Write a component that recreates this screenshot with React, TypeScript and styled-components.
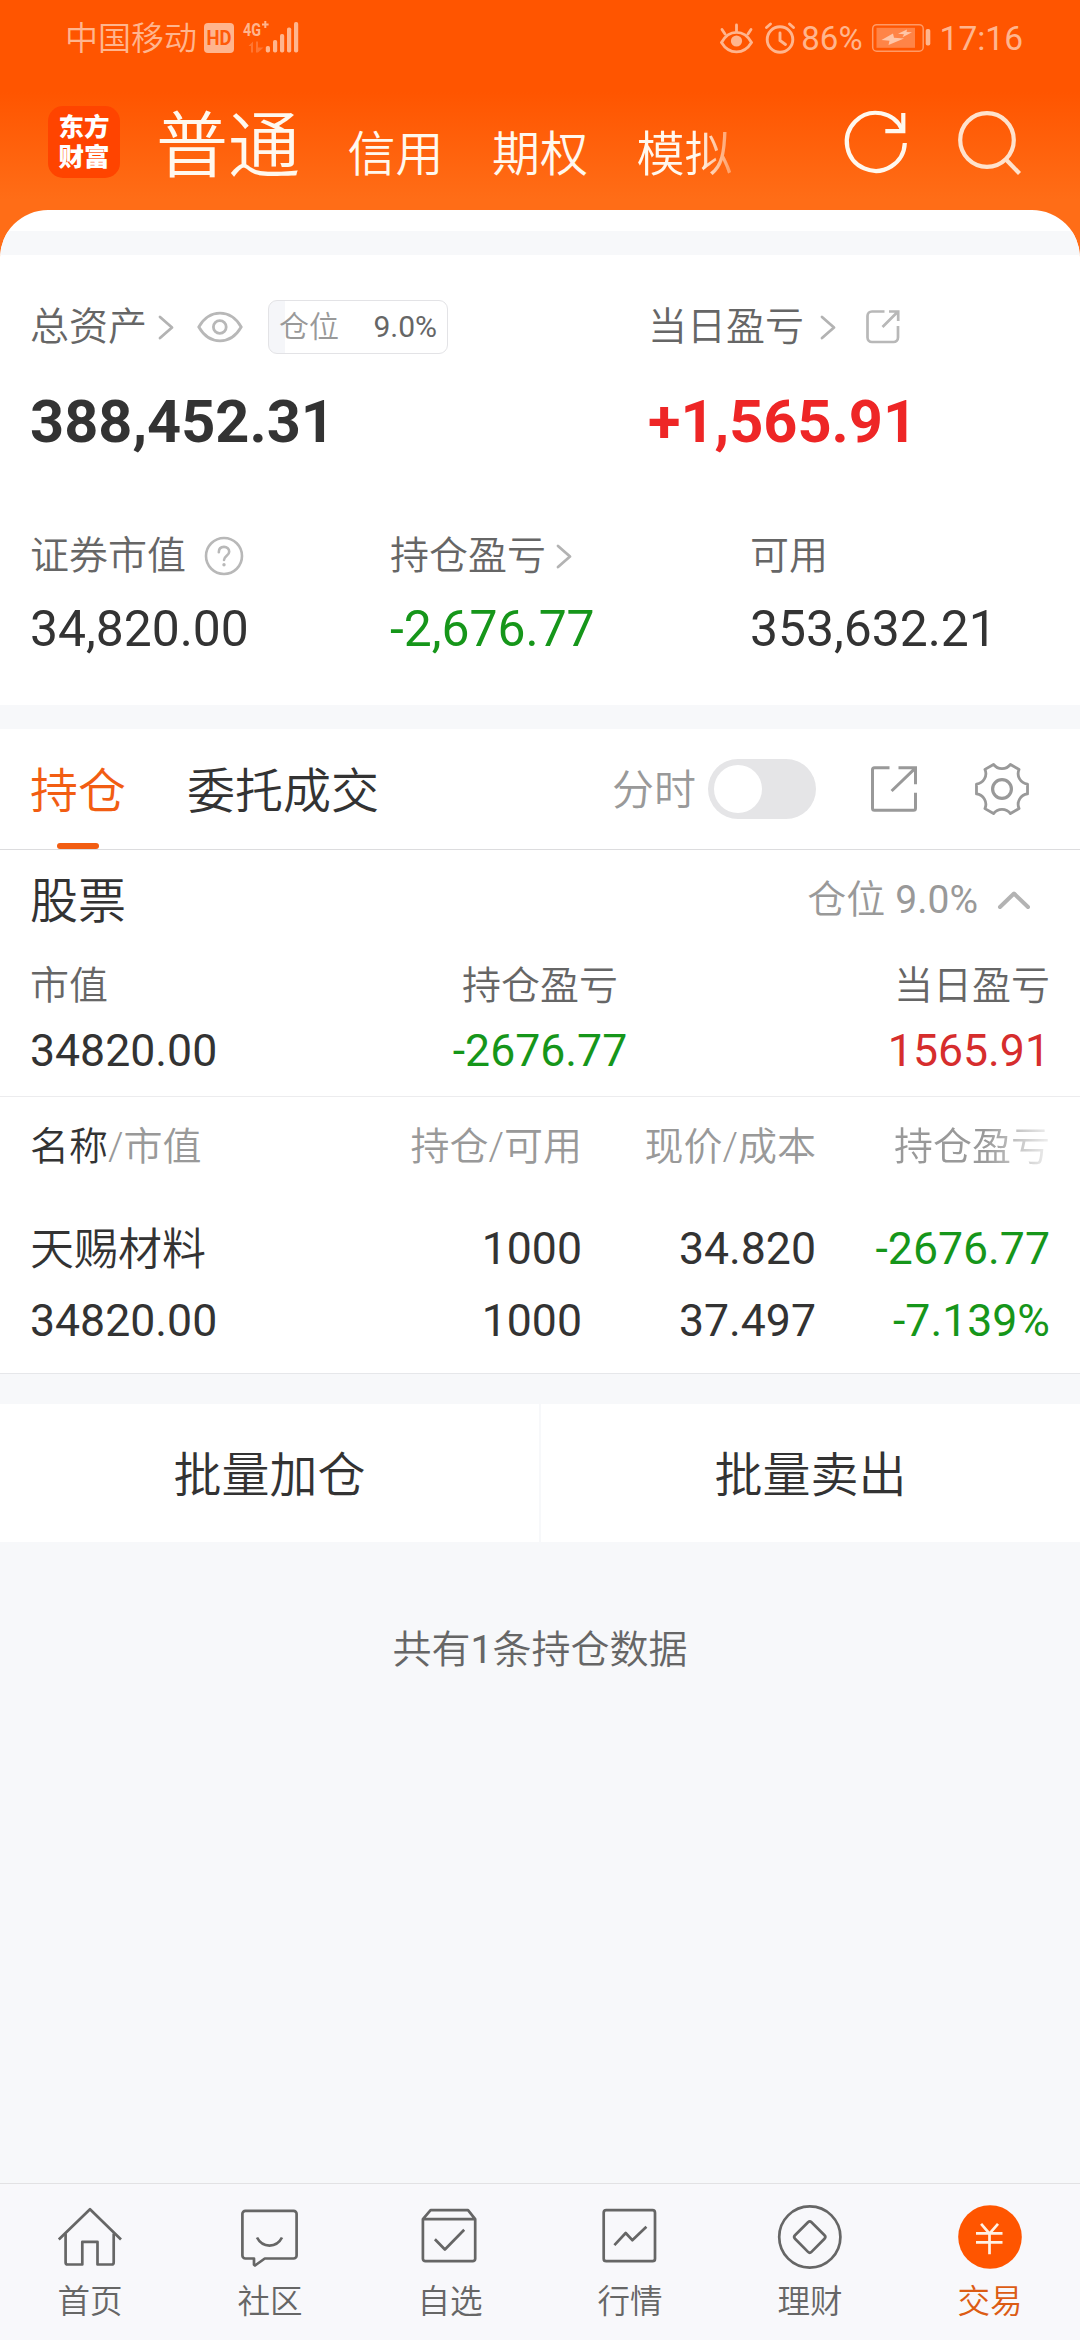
import React from 'react';
import styled, { createGlobalStyle } from 'styled-components';

const GlobalStyle = createGlobalStyle`
  * { box-sizing: border-box; }
  body { margin: 0; background: #f7f8fa; }
  svg { display: block; flex: none; overflow: visible; }
`;

const ink = '#333333';
const grey = '#666666';
const pale = '#999999';
const green = '#16961a';
const red = '#ee2626';
const orange = '#f25d12';

const Screen = styled.div`
  width: 1080px;
  height: 2340px;
  display: flex;
  flex-direction: column;
  background: #f7f8fa;
  font-family: Roboto, 'Noto Sans CJK SC', sans-serif;
  font-weight: 350;
  line-height: 1.4;
  color: ${ink};
  white-space: nowrap;
  overflow: hidden;
`;

const Masthead = styled.header`
  height: 258px;
  margin-bottom: -48px;
  flex: none;
  background: linear-gradient(#ff5500 0, #ff5500 92px, #ff6d17 200px, #ff6d17 100%);
`;

const StatusBar = styled.div`
  display: flex;
  align-items: center;
  justify-content: space-between;
  height: 76px;
  padding: 0 57px 0 65px;
  color: #ffb58e;
`;

const StatusGroup = styled.div`
  display: flex;
  align-items: center;
`;

const StatusText = styled.span<{ $size: number; $w?: number; $ml?: number }>`
  font-size: ${p => p.$size}px;
  font-weight: ${p => p.$w ?? 400};
  line-height: 40px;
  padding-top: 2px;
  margin-left: ${p => p.$ml ?? 0}px;
`;

const IconSlot = styled.span<{ $ml?: number }>`
  margin-left: ${p => p.$ml ?? 0}px;
  display: flex;
`;

const TitleBar = styled.div`
  display: flex;
  align-items: center;
  height: 132px;
  padding-left: 48px;
  color: #fff8ee;
`;

const Logo = styled.div`
  width: 72px;
  height: 72px;
  border-radius: 15px;
  background: #ff4400;
  display: flex;
  flex-direction: column;
  align-items: center;
  justify-content: center;
  font-weight: 900;
  font-size: 25.5px;
  line-height: 30px;
  color: #fff;
`;

const ModeTabs = styled.nav`
  display: flex;
  align-items: baseline;
  width: 586px;
  margin-left: 36px;
  padding-top: 18px;
  line-height: 84px;
`;

const ModeTab = styled.span<{ $active?: boolean; $fade?: boolean }>`
  font-size: ${p => (p.$active ? 72 : 48)}px;
  margin-right: ${p => (p.$active ? 47.5 : 48.5)}px;
  ${p => p.$fade && 'mask-image: linear-gradient(90deg, #000 64%, rgba(0,0,0,.35) 100%);'}
`;

const Card = styled.section`
  position: relative;
  flex: none;
  height: 495px;
  border-radius: 48px 48px 0 0;
  overflow: hidden;
  background: #fff;
  padding-top: 21px;
`;

const Band = styled.div<{ $h: number }>`
  flex: none;
  height: ${p => p.$h}px;
  background: #f7f8fa;
`;

const AssetGrid = styled.div`
  display: grid;
  grid-template-columns: 618px 1fr;
  grid-template-rows: 54px 72px;
  row-gap: 32px;
  padding: 45px 0 0 30px;
  align-items: center;
`;

const MetricGrid = styled.div`
  display: grid;
  grid-template-columns: repeat(3, 360px);
  grid-template-rows: 54px 60px;
  row-gap: 16px;
  padding: 71px 0 0 30px;
  align-items: center;
`;

const Label = styled.div<{ $align?: string }>`
  display: flex;
  align-items: center;
  justify-content: ${p => p.$align ?? 'flex-start'};
  font-size: 39px;
  line-height: 54px;
  color: ${grey};
`;

const Figure = styled.div<{ $size: number; $color?: string; $bold?: boolean; $align?: string }>`
  font-size: ${p => p.$size}px;
  font-weight: ${p => (p.$bold ? 700 : 400)};
  color: ${p => p.$color ?? ink};
  text-align: ${p => p.$align ?? 'left'};
  line-height: 60px;
`;

const Ratio = styled.div`
  width: 180px;
  height: 54px;
  margin-left: 25px;
  padding: 0 10px 0 10px;
  border: 1px solid #e3e3e6;
  border-radius: 9px;
  background: linear-gradient(90deg, #f5f6f9 16px, #fff 16px);
  display: flex;
  align-items: center;
  justify-content: space-between;
  font-size: 30px;
  color: ${pale};
`;

const Num = styled.span<{ $color?: string }>`
  font-weight: 400;
  color: ${p => p.$color ?? 'inherit'};
`;

const Toolbar = styled.div`
  flex: none;
  display: flex;
  align-items: center;
  height: 121px;
  padding-left: 30px;
  background: #fff;
  border-bottom: 1px solid #dcdcde;
`;

const Tab = styled.div<{ $active?: boolean }>`
  height: 120px;
  margin-right: 61px;
  padding-top: 3px;
  display: flex;
  flex-direction: column;
  align-items: center;
  font-size: 48px;
  line-height: 120px;
  color: ${p => (p.$active ? orange : ink)};
  &::after {
    content: '';
    flex: none;
    width: 42px;
    height: 6px;
    margin-top: -9px;
    border-radius: 3px;
    background: ${p => (p.$active ? orange : 'transparent')};
  }
`;

const ToolLabel = styled.span`
  margin-left: auto;
  padding-top: 4px;
  font-size: 42px;
  color: ${pale};
`;

const Toggle = styled.span`
  width: 108px;
  height: 60px;
  margin-left: 12px;
  padding: 6px;
  border-radius: 30px;
  background: #e5e5e7;
  &::after {
    content: '';
    display: block;
    width: 48px;
    height: 48px;
    border-radius: 50%;
    background: #fff;
  }
`;

const Group = styled.section`
  flex: none;
  height: 247px;
  background: #fff;
  border-bottom: 1px solid #ececee;
`;

const GroupHead = styled.div`
  display: flex;
  align-items: center;
  justify-content: space-between;
  height: 102px;
  padding: 1px 49px 0 30px;
  font-size: 48px;
`;

const GroupRatio = styled.div`
  display: flex;
  align-items: center;
  gap: 10px;
  padding-bottom: 3px;
  font-size: 39px;
  color: ${pale};
`;

const GroupStats = styled.div`
  display: grid;
  grid-template-columns: repeat(3, 340px);
  grid-template-rows: 54px 60px;
  row-gap: 8px;
  padding: 7px 30px 0;
`;

const Table = styled.section`
  flex: none;
  height: 277px;
  background: #fff;
  border-bottom: 1px solid #e6e7ea;
`;

const TableRow = styled.div<{ $h: number; $mt?: number }>`
  display: grid;
  grid-template-columns: 318px repeat(3, 234px);
  align-items: center;
  height: ${p => p.$h}px;
  margin: ${p => p.$mt ?? 0}px 30px 0;
`;

const HeadCell = styled.div<{ $right?: boolean; $fade?: boolean }>`
  padding-top: 3px;
  font-size: 39px;
  text-align: ${p => (p.$right ? 'right' : 'left')};
  color: ${pale};
  ${p => p.$fade && 'mask-image: linear-gradient(90deg, #000 72%, rgba(0,0,0,.15) 100%);'}
`;

const Strong = styled.span`
  color: ${ink};
`;

const StockName = styled.div`
  padding-top: 2px;
  font-size: 44px;
  line-height: 58px;
`;

const Actions = styled.div`
  flex: none;
  display: grid;
  grid-template-columns: 1fr 1fr;
  gap: 2px;
  height: 138px;
`;

const Action = styled.div`
  display: flex;
  align-items: center;
  justify-content: center;
  padding-top: 5px;
  background: #fff;
  font-size: 48px;
`;

const Summary = styled.div`
  flex: 1;
  padding-top: 78px;
  text-align: center;
  font-size: 39px;
  line-height: 60px;
  color: ${grey};
`;

const BottomNav = styled.nav`
  flex: none;
  display: grid;
  grid-template-columns: repeat(6, 1fr);
  height: 157px;
  border-top: 1px solid #e2e2e4;
  background: #f8f8fb;
`;

const NavItem = styled.div<{ $active?: boolean }>`
  display: flex;
  flex-direction: column;
  align-items: center;
  padding-top: 21px;
  font-size: 32.6px;
  line-height: 40px;
  gap: 13px;
  color: ${p => (p.$active ? '#dc5c14' : grey)};
`;

const Chevron = ({ ml }: { ml: number }) => (
  <IconSlot $ml={ml}>
    <svg width="16" height="25" viewBox="0 0 16 25" fill="none" stroke="#b3b3b3" strokeWidth="2.8" strokeLinecap="round" strokeLinejoin="round">
      <path d="M2 2 L14 12.5 L2 23" />
    </svg>
  </IconSlot>
);

const Signal = () => (
  <svg width="94" height="32" viewBox="204 22 94 32" fill="#ffb58e">
    <rect x="204" y="23" width="30" height="30" rx="4" />
    <text x="206.5" y="45" fontSize="20" fontWeight="700" fill="#ff5a08" textLength="25" lengthAdjust="spacingAndGlyphs">HD</text>
    <text x="243" y="36" fontSize="19" fontWeight="700" textLength="18" lengthAdjust="spacingAndGlyphs">4G</text>
    <path d="M262 24.5h6.6M265.3 21v7" stroke="#ffb58e" strokeWidth="2" />
    <path d="M248.5 46l4.5-4.5v11h-2v-6.500zM256 41.500h2v6h5.500l-5.500 5h-2z" opacity=".35" />
    <rect x="265.800" y="46" width="4.200" height="6.500" rx="1.800" />
    <rect x="273" y="40" width="4.200" height="12.500" rx="1.800" />
    <rect x="280" y="34" width="4.200" height="18.500" rx="1.800" />
    <rect x="287" y="27.500" width="4.200" height="25" rx="1.800" />
    <rect x="294" y="22" width="4.200" height="30.500" rx="1.800" />
  </svg>
);

const EyeComfort = () => (
  <svg width="34" height="32" viewBox="717 21 34 32" fill="none" stroke="#ffb58e" strokeWidth="2.8" strokeLinecap="round">
    <path d="M719.500 41.500C727 28 742 28 749.500 41.500C742 54 727 54 719.500 41.500Z" />
    <circle cx="734.500" cy="40" r="5.600" fill="#ffb58e" stroke="none" />
    <path d="M734.500 24v6M720 28.500l3 4.500M749 28.500l-3 4.500" />
  </svg>
);

const Alarm = () => (
  <svg width="32" height="32" viewBox="762 21 32 32" fill="none" stroke="#ffb58e" strokeWidth="2.900" strokeLinecap="round">
    <circle cx="778" cy="38.500" r="12.800" />
    <path d="M778 32v7.500l5.500 4M764.500 26.500l4-3.500M791.500 26.500l-4-3.500" />
  </svg>
);

const Battery = () => (
  <svg width="58" height="30" viewBox="871 23 58 30" fill="none">
    <rect x="871.700" y="24.700" width="50.500" height="26.500" rx="4" stroke="#ff9a66" strokeWidth="1.500" />
    <rect x="875.500" y="27.800" width="38.500" height="20" fill="#ff8447" />
    <rect x="924.700" y="29" width="4.600" height="16.500" rx="1.800" fill="#ffb58e" />
    <path d="M892 33.500l-11.500 6.500 8 .8-1 4.200 15.500-6.500-10-.8zM906 29.500l-9 4.200 6 .5-1.500 3 9.500-5-5.500-.2z" fill="#ffc6a8" />
  </svg>
);

const Refresh = () => (
  <svg width="66" height="66" viewBox="843 110 66 66" fill="none" stroke="#fff8ee" strokeWidth="4.200">
    <path d="M904.800 144A29 29 0 1 1 902.300 131" />
    <path d="M903.300 114v18.200h-18" />
  </svg>
);

const Search = () => (
  <svg width="66" height="66" viewBox="956 108 66 66" fill="none" stroke="#ffe2cc" strokeWidth="4.200">
    <circle cx="987" cy="139" r="26.800" />
    <path d="M1005.500 158l14 14.500" />
  </svg>
);

const Eye = () => (
  <svg width="46" height="32" viewBox="0 0 46 32" fill="none" stroke="#b8b8b8" strokeWidth="2.800">
    <path d="M1.800 16C7 7 14 2.200 23 2.200S39 7 44.200 16C39 25 32 29.800 23 29.800S7 25 1.800 16Z" />
    <circle cx="22.800" cy="16" r="6.400" />
  </svg>
);

const Help = () => (
  <svg width="40" height="40" viewBox="0 0 40 40" fill="none" stroke="#b8b8b8" strokeWidth="2.600" strokeLinecap="round">
    <circle cx="20" cy="20" r="18" />
    <path d="M14.800 16.200c0-3.400 2.200-5.300 5.200-5.300s5.200 2 5.200 4.800c0 4-5.200 4-5.200 8.300" />
    <circle cx="20" cy="28.800" r="1.700" fill="#b8b8b8" stroke="none" />
  </svg>
);

const ShareSmall = () => (
  <svg width="34" height="34" viewBox="865 310 34 34" fill="none" stroke="#b8b8b8" strokeWidth="2.700">
    <path d="M883.500 311.500h-12.500a4.500 4.500 0 0 0-4.500 4.500v21.500a4.500 4.500 0 0 0 4.500 4.500h21.500a4.500 4.500 0 0 0 4.500-4.500v-11.500" />
    <path d="M888 311.500h9.200v9.500M881.500 327l15.500-15.500" />
  </svg>
);

const ShareLarge = () => (
  <svg width="46" height="46" viewBox="871 766 46 46" fill="none" stroke="#999" strokeWidth="3">
    <path d="M889.500 767.800h-15a2 2 0 0 0-2 2v38.500a2 2 0 0 0 2 2h39a2 2 0 0 0 2-2v-15.500" />
    <path d="M898.500 767.800h17v16.400M891.600 791l24-23.200" />
  </svg>
);

const gearPath = (() => {
  const at = (deg: number) => {
    const a = (deg * Math.PI) / 180;
    return `${(27 + 26 * Math.cos(a)).toFixed(2)} ${(27 + 26 * Math.sin(a)).toFixed(2)}`;
  };
  let d = `M${at(-11)}`;
  for (let k = 0; k < 6; k++) {
    d += ` L${at(60 * k + 11)} A10.500 10.500 0 0 0 ${at(60 * k + 49)}`;
  }
  return d + 'Z';
})();

const Gear = () => (
  <svg width="54" height="54" viewBox="0 0 54 54" fill="none" stroke="#999" strokeWidth="2.800" strokeLinejoin="round">
    <path d={gearPath} />
    <circle cx="27" cy="27" r="9.400" strokeWidth="3.200" />
  </svg>
);

const Collapse = () => (
  <svg width="34" height="20" viewBox="0 0 34 20" fill="none" stroke="#b3b3b3" strokeWidth="4" strokeLinecap="round" strokeLinejoin="round">
    <path d="M3 17L17 3.500L31 17" />
  </svg>
);

const navIcons: Record<string, React.ReactNode> = {
  首页: (
    <>
      <path d="M.8 34.500L32 4.200L63 34.500" />
      <path d="M7.600 28.500v29a2 2 0 0 0 2 2h14.700v-22.700h15.200v22.700h14.200a2 2 0 0 0 2-2v-29" />
    </>
  ),
  社区: (
    <>
      <path d="M7.400 5.800h48.200a3 3 0 0 1 3 3v41.700a3 3 0 0 1-3 3H26.800L17 60.500l-1-.8v-6.200H7.400a3 3 0 0 1-3-3V8.800a3 3 0 0 1 3-3Z" />
      <path d="M19 32.500c5.500 10.700 19.500 10.700 25 0" />
    </>
  ),
  自选: (
    <>
      <path d="M4.900 14.200L12.600 5.200H50l7.200 9v39.500a2.500 2.500 0 0 1-2.500 2.500H7.400a2.500 2.500 0 0 1-2.500-2.500ZM4.900 14.200h52.300" />
      <path d="M16.900 34.200l10 10.300L46.200 24.800" />
    </>
  ),
  行情: (
    <>
      <rect x="5.700" y="5.200" width="51.300" height="51" rx="2.500" />
      <path d="M16.400 40.200L27.700 28L34.300 35.200L48.400 21.800" />
    </>
  ),
  理财: (
    <>
      <circle cx="31.800" cy="32" r="30.600" />
      <path d="M30 17.200a2.500 2.500 0 0 1 3.500 0L46.500 30.300a2.500 2.500 0 0 1 0 3.500L33.500 46.900a2.500 2.500 0 0 1-3.500 0L17 33.800a2.500 2.500 0 0 1 0-3.500Z" />
    </>
  ),
  交易: (
    <>
      <circle cx="32" cy="32" r="31.800" fill="#ff5500" stroke="none" />
      <path stroke="#fff1e4" d="M23.100 18.800L31.500 28.600L40 18.800M18 28.400h26.500M18 37.300h26.500M31.500 28.400v20.800" />
    </>
  ),
};

const holding = {
  name: '天赐材料',
  value: '34820.00',
  held: '1000',
  usable: '1000',
  price: '34.820',
  cost: '37.497',
  profit: '-2676.77',
  rate: '-7.139%',
};

export default function App() {
  return (
    <Screen>
      <GlobalStyle />
      <Masthead>
        <StatusBar>
          <StatusGroup>
            <StatusText $size={33} $w={350}>中国移动</StatusText>
            <IconSlot $ml={7}><Signal /></IconSlot>
          </StatusGroup>
          <StatusGroup>
            <EyeComfort />
            <IconSlot $ml={11}><Alarm /></IconSlot>
            <StatusText $size={33} $ml={5}>86%</StatusText>
            <IconSlot $ml={9}><Battery /></IconSlot>
            <StatusText $size={33.5} $ml={10}>17:16</StatusText>
          </StatusGroup>
        </StatusBar>
        <TitleBar>
          <Logo>
            <span>东方</span>
            <span>财富</span>
          </Logo>
          <ModeTabs>
            <ModeTab $active>普通</ModeTab>
            <ModeTab>信用</ModeTab>
            <ModeTab>期权</ModeTab>
            <ModeTab $fade>模拟</ModeTab>
          </ModeTabs>
          <IconSlot $ml={101}><Refresh /></IconSlot>
          <IconSlot $ml={47}><Search /></IconSlot>
        </TitleBar>
      </Masthead>

      <Card>
        <Band $h={24} />
        <AssetGrid>
          <Label>
            总资产
            <Chevron ml={11} />
            <IconSlot $ml={23}><Eye /></IconSlot>
            <Ratio>
              仓位
              <Num $color={grey}>9.0%</Num>
            </Ratio>
          </Label>
          <Label>
            当日盈亏
            <Chevron ml={16} />
            <IconSlot $ml={30}><ShareSmall /></IconSlot>
          </Label>
          <Figure $size={59.5} $bold>388,452.31</Figure>
          <Figure $size={59.5} $bold $color={red}>+1,565.91</Figure>
        </AssetGrid>
        <MetricGrid>
          <Label>
            证券市值
            <IconSlot $ml={18}><Help /></IconSlot>
          </Label>
          <Label>
            持仓盈亏
            <Chevron ml={10} />
          </Label>
          <Label>可用</Label>
          <Figure $size={49.8}>34,820.00</Figure>
          <Figure $size={49.8} $color={green}>-2,676.77</Figure>
          <Figure $size={49.8}>353,632.21</Figure>
        </MetricGrid>
      </Card>

      <Band $h={24} />

      <Toolbar>
        <Tab $active>持仓</Tab>
        <Tab>委托成交</Tab>
        <ToolLabel>分时</ToolLabel>
        <Toggle />
        <IconSlot $ml={55}><ShareLarge /></IconSlot>
        <IconSlot $ml={58}><Gear /></IconSlot>
        <IconSlot $ml={51} />
      </Toolbar>

      <Group>
        <GroupHead>
          股票
          <GroupRatio>
            仓位
            <Num>9.0%</Num>
            <IconSlot $ml={9}><Collapse /></IconSlot>
          </GroupRatio>
        </GroupHead>
        <GroupStats>
          <Label>市值</Label>
          <Label $align="center">持仓盈亏</Label>
          <Label $align="flex-end">当日盈亏</Label>
          <Figure $size={44.6}>34820.00</Figure>
          <Figure $size={44.6} $align="center" $color={green}>-2676.77</Figure>
          <Figure $size={44.6} $align="right" $color="#d62d2d">1565.91</Figure>
        </GroupStats>
      </Group>

      <Table>
        <TableRow $h={98}>
          <HeadCell><Strong>名称</Strong>/市值</HeadCell>
          <HeadCell $right>持仓/可用</HeadCell>
          <HeadCell $right>现价/成本</HeadCell>
          <HeadCell $right $fade>持仓盈亏</HeadCell>
        </TableRow>
        <TableRow $h={60} $mt={24}>
          <StockName>{holding.name}</StockName>
          <Figure $size={44.6} $align="right">{holding.held}</Figure>
          <Figure $size={44.6} $align="right">{holding.price}</Figure>
          <Figure $size={44.6} $align="right" $color={green}>{holding.profit}</Figure>
        </TableRow>
        <TableRow $h={60} $mt={12}>
          <Figure $size={44.6}>{holding.value}</Figure>
          <Figure $size={44.6} $align="right">{holding.usable}</Figure>
          <Figure $size={44.6} $align="right">{holding.cost}</Figure>
          <Figure $size={44.6} $align="right" $color={green}>{holding.rate}</Figure>
        </TableRow>
      </Table>

      <Band $h={30} />

      <Actions>
        <Action>批量加仓</Action>
        <Action>批量卖出</Action>
      </Actions>

      <Summary>共有<Num>1</Num>条持仓数据</Summary>

      <BottomNav>
        {Object.entries(navIcons).map(([label, icon]) => (
          <NavItem key={label} $active={label === '交易'}>
            <svg width="64" height="64" viewBox="0 0 64 64" fill="none" stroke="#666" strokeWidth="2.700" strokeLinejoin="round">
              {icon}
            </svg>
            {label}
          </NavItem>
        ))}
      </BottomNav>
    </Screen>
  );
}
